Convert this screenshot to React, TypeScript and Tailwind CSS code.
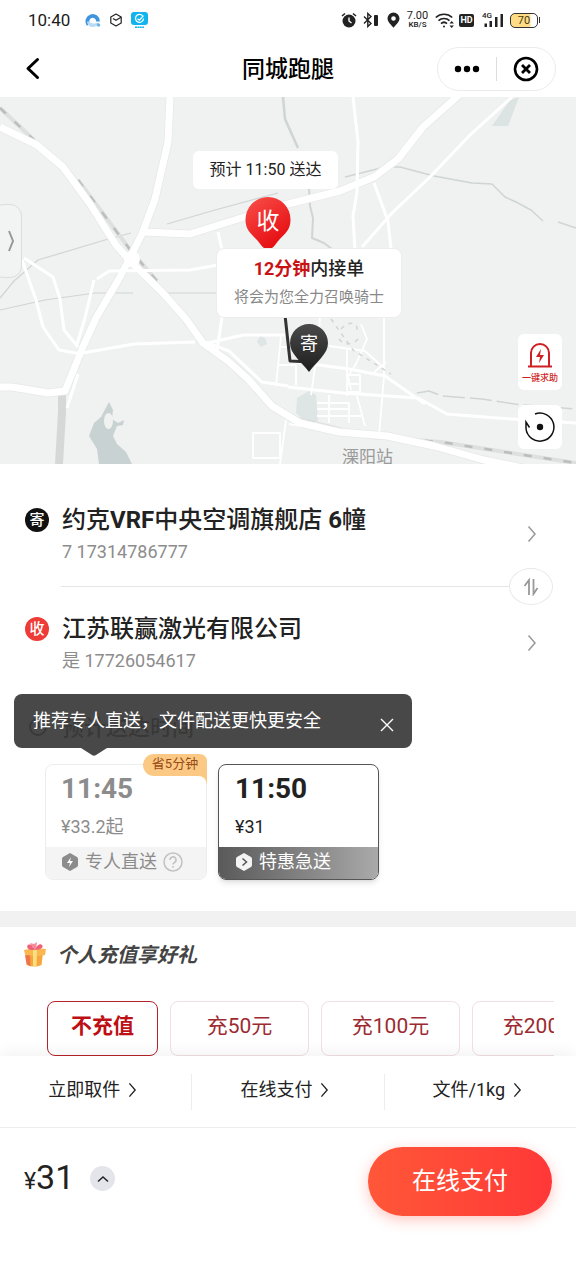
import React from "react";

const rechargeOptions = ["不充值", "充50元", "充100元", "充200元"];
const orderOptions = ["立即取件", "在线支付", "文件/1kg"];

function Chevron({ className }: { className: string }) {
  return (
    <svg viewBox="0 0 10 18" fill="none" stroke="currentColor" strokeWidth="1.5" className={className} aria-hidden="true">
      <path d="M1.5 1.5 8 9l-6.5 7.5" />
    </svg>
  );
}

function StatusBar() {
  return (
    <div className="flex h-10 items-center justify-between pl-7 pr-9 text-[#1c1c1c]">
      <div className="flex items-center">
        <span className="w-[43px] text-[17px] leading-6">10:40</span>
        <svg viewBox="0 0 16 16" className="ml-3.5 size-4" aria-hidden="true">
          <path d="M3.500 12.500A5.300 5.300 0 1 1 13 9.500" fill="none" stroke="#3f95dd" strokeWidth="3.800" />
          <path d="M2 10c2-1.500 3.500 1.500 6 1.500s4-1.500 6-.5c-1 2.500-3.500 4-6.500 4C4.500 15 2.500 13 2 10Z" fill="#b9dcf8" />
          <circle cx="13.500" cy="13" r="1.800" fill="#6db4ea" />
        </svg>
        <svg viewBox="0 0 14 14" className="ml-2 size-3.5" fill="none" stroke="#222" strokeWidth="1.200" strokeLinejoin="round" aria-hidden="true">
          <path d="m7 1 5.200 3v6L7 13l-5.200-3V4Z" />
          <path d="m4 5.500 3 1.800L12 4.300" />
        </svg>
        <svg viewBox="0 0 17 17" className="ml-2 size-[17px]" aria-hidden="true">
          <rect x="0" y="0" width="17" height="13" rx="3" fill="#12b4ef" />
          <path d="M11.500 3.700a4 4 0 1 0 1 2.800M6.500 6.700l2 1.500 4-4.500" fill="none" stroke="#fff" strokeWidth="1.200" />
          <path d="M4 15.300h9" stroke="#12b4ef" strokeWidth="1.600" strokeDasharray="2 .4" />
        </svg>
      </div>
      <div className="flex items-center">
        <svg viewBox="0 0 16 16" className="size-4" aria-hidden="true">
          <circle cx="8" cy="9" r="6.500" fill="#222" />
          <path d="M1 4 4 1.500M15 4l-3-2.500" stroke="#222" strokeWidth="1.600" />
          <path d="M8 5.500V9l2.500 2" stroke="#fff" strokeWidth="1.400" fill="none" />
        </svg>
        <svg viewBox="0 0 16 16" className="ml-1.5 size-4" aria-hidden="true">
          <path d="m1 4.500 7 7-3.200 3V1.500L8 4.500l-7 7" fill="none" stroke="#222" strokeWidth="1.400" />
          <rect x="11" y="3" width="4" height="11" rx="1" fill="#222" />
        </svg>
        <svg viewBox="0 0 13 16" className="ml-2 h-4 w-[13px]" aria-hidden="true">
          <path fillRule="evenodd" d="M6.500.5a6 6 0 0 0-6 6c0 3.500 4 6.500 6 9.300 2-2.800 6-5.800 6-9.300a6 6 0 0 0-6-6Zm0 3.700a2.300 2.300 0 1 1 0 4.600 2.300 2.300 0 0 1 0-4.600Z" fill="#222" />
        </svg>
        <div className="ml-1.5 flex w-[23px] flex-col items-center">
          <span className="text-[11px] leading-[10px]">7.00</span>
          <span className="text-[8px] font-medium leading-[8px]">KB/S</span>
        </div>
        <svg viewBox="0 0 20 17" className="ml-1.5 h-[17px] w-5" fill="none" stroke="#222" strokeWidth="1.700" aria-hidden="true">
          <path d="M.8 5.500a12 12 0 0 1 16.400 0M3.500 8.700a8 8 0 0 1 11 0M6 11.600a4.500 4.500 0 0 1 6 0" />
          <circle cx="9" cy="14.500" r="1" fill="#222" stroke="none" />
          <path d="M14.500 11.500 16.700 9l2.200 2.500ZM14.500 13.500l2.200 2.500 2.200-2.500Z" fill="#222" stroke="none" />
        </svg>
        <span className="ml-1 flex h-[13px] w-[15px] items-center justify-center rounded-xs bg-[#222] text-[9px] font-bold leading-[13px] text-white">HD</span>
        <div className="relative ml-2 h-4 w-[22px]">
          <span className="absolute left-0 top-0 text-[8px] font-medium leading-[8px]">4G</span>
          <svg viewBox="0 0 22 16" className="h-4 w-[22px]" fill="#222" aria-hidden="true">
            <path d="M2.500 11.500H5V15H2.500zM7.500 9H10v6H7.500zM13 5h2.500v10H13zM18.500 2H21v13h-2.500z" />
          </svg>
        </div>
        <div className="ml-1.5 flex h-[15px] w-7 items-center justify-center rounded-[5px] border border-[#333] bg-linear-to-r from-[#ffdc85] from-70% to-white to-80% text-[11px] leading-none text-[#4a3a10]">70</div>
        <span className="ml-px h-1.5 w-px bg-[#333]" />
      </div>
    </div>
  );
}

function Header() {
  return (
    <header className="grid h-[57px] grid-cols-3 items-center px-5">
      <button type="button" aria-label="返回" className="flex size-8 items-center">
        <svg viewBox="0 0 24 24" className="size-6" fill="none" stroke="#000" strokeWidth="3" strokeLinecap="round" strokeLinejoin="round" aria-hidden="true">
          <path d="M17.500 2.500 8 11.500l9.500 9" />
        </svg>
      </button>
      <h1 className="pt-0.5 text-center text-[23px] font-medium leading-8 text-black">同城跑腿</h1>
      <div className="flex h-11 w-[119px] items-center justify-self-end rounded-full border border-[#ececec]">
        <button type="button" aria-label="更多" className="flex flex-1 justify-center">
          <svg viewBox="0 0 26 8" className="h-2 w-[26px]" aria-hidden="true">
            <circle cx="4" cy="4" r="3.200" /><circle cx="13" cy="4" r="3.200" /><circle cx="22" cy="4" r="3.200" />
          </svg>
        </button>
        <span className="h-6 w-px bg-[#dcdcdc]" />
        <button type="button" aria-label="关闭" className="flex flex-1 justify-center">
          <svg viewBox="0 0 26 26" className="size-[26px]" fill="none" stroke="#000" aria-hidden="true">
            <circle cx="13" cy="13" r="11" strokeWidth="2.600" />
            <path d="m9 9 8 8m0-8-8 8" strokeWidth="2.800" />
          </svg>
        </button>
      </div>
    </header>
  );
}

function MapCanvas() {
  return (
    <svg viewBox="0 97 576 367" preserveAspectRatio="xMidYMid slice" className="size-full" fill="none" strokeLinejoin="round" aria-hidden="true">
      <g fill="#c9d2d2">
        <path d="m99 464-2-15-8-13 5-13 7-6 8-15 4 8-1 9 6 4 6-3-1 5-6 1-4 10 4 8 9 8 6 12Z" />
        <path d="m297 398 12-7 7 4 2 26-12 1-10-9Z" fill="#dde5e5" />
        <path d="m510 100 9-3-11 29-16 0Z" fill="#dbe3e3" />
        <path d="m260 336 5 2 2 6-6 3-4-5Z" fill="#dfe4e4" />
      </g>
      <ellipse cx="108.500" cy="421" rx="4.500" ry="8" fill="#f0f1f1" />
      <g stroke="#cfd5d5" strokeWidth="1.200">
        <path d="m38 260 67-20 26-7M0 310l45-10 50-7h38M168 293h48M0 298l14-17 24-21M167 224l48-14 63-17" />
        <path d="m283 97 2 22 13 29" strokeWidth="2.500" />
        <path d="m309 188 1 18 3 12-1 20 12 5 8 6" strokeWidth="2" />
        <path d="m345 177 40-10 15 0 34 9 38 7 20 1 13 13 11 5 15 8 12 11M558 222l18 6" strokeWidth="1.500" />
        <path d="m417 393 12-2 13 5 40 3 40 6 54 4" strokeDasharray="22 5" strokeWidth="1.500" />
      </g>
      <g stroke="#dedfdf" strokeWidth="4"><path d="m0 108 34 32M78 180l53 71 26 30M205 343l14 12M256 392l30 24 85 21 70 5 70 11 65 10" /></g>
      <g stroke="#bcbdbd" strokeWidth="2.500" strokeDasharray="8 12"><path d="m0 108 34 32M78 180l53 71 26 30M205 343l14 12M256 392l30 24 85 21 70 5 70 11 65 10" /></g>
      <path d="m62 392 0 20-3 52" stroke="#d6d7d7" strokeWidth="8" />
      <g stroke="#e7e8e8">
        <path d="m0 127 37 18 26 22 27 37 26 41 15 17 31 30 24 27 17 24 25 18 20 18 24 27 28 17 39 9 48 4 47 10 50 14 44 9" strokeWidth="8.500" />
        <path d="m170 97-2 45-13 57-13 35-22 43-24 41-14 31-17 42-17 2-36-6H0" strokeWidth="8.500" />
        <path d="m143 232 47 2 48-15 50-15 52-13 34-14 24-18 25-32 36-32" strokeWidth="8.500" />
      </g>
      <g stroke="#fff" strokeWidth="7">
        <path d="m0 127 37 18 26 22 27 37 26 41 15 17 31 30 24 27 17 24 25 18 20 18 24 27 28 17 39 9 48 4 47 10 50 14 44 9" />
        <path d="m170 97-2 45-13 57-13 35-22 43-24 41-14 31-17 42-17 2-36-6H0" />
        <path d="m143 232 47 2 48-15 50-15 52-13 34-14 24-18 25-32 36-32" />
      </g>
      <circle cx="132" cy="259" r="8" fill="#fff" />
      <g stroke="#fff" strokeWidth="3">
        <path d="m353 97 5 45-1 50-4 24 2 34M512 97l-42 38-40 42-38 36-30 34M374 183l14 38 3 28M218 232l4 18M97 279l12-8 81-1 28-5M22 260l14 40 7 27 16 23 22 4M24 258l29 19 7 22 4 31 14 17M94 280l-9 38-8 26M77 354l57-10 61-2M208 343l35-8 45 0M205 342l24 9 33 31 26 4M78 374l-11 34M222 317l-5 34" />
        <path d="m288 387 55 6 75 5 29 16 50 4 79 5M288 361l61 8 36 7 40 28" />
      </g>
      <g stroke="#fff" strokeWidth="1.800">
        <path d="M384 317v60l-5 58M320 317l-2 29-7 49M361 324l6 15-11 25-8 12 3 14M329 346l36 5 20 18M347 349v47M317 403h32v20M329 395v28M317 409h32M317 416h44M357 396l8 30M289 424l26 4 63 8M253 433h27v25h-27ZM281 336l-5 50M281 347h7M279 365h17v20M346 375h14v17h-13M346 384h13M386 362l-15 13M286 420l-6 44" />
      </g>
      <path d="m331 319 22 31 38 24M341 329c12-12 18-3 16 4M339 339c5 7 14 6 19 0" stroke="#cfd5d5" strokeWidth="1.500" strokeDasharray="4 5" />
      <path d="m285 315 5 46 20 1" stroke="#333" strokeWidth="3" />
    </svg>
  );
}

function DeliveryMap() {
  return (
    <section aria-label="地图" className="relative h-[367px] overflow-hidden bg-[#f0f1f1]">
      <MapCanvas />
      <span className="absolute left-[342px] top-[348px] text-[17px] leading-6 text-[#9b9b9b]">溧阳站</span>
      <button type="button" aria-label="展开" className="absolute -left-2 top-[107px] flex h-[74px] w-[30px] items-center justify-center rounded-xl border border-[#dcdcdc] bg-[#f2f3f3] pl-2 text-[#999]">
        <svg viewBox="0 0 8 22" className="h-[22px] w-2" fill="none" stroke="currentColor" strokeWidth="2" aria-hidden="true"><path d="m2 1 4 10-4 10" /></svg>
      </button>
      <div className="absolute left-[193px] top-[54px] flex h-[38px] w-[145px] items-center justify-center rounded-md bg-white text-base text-[#222]">预计 11:50 送达</div>
      <div className="absolute left-[245px] top-[99px] h-[54px] w-[46px]">
        <svg viewBox="0 0 46 54" className="absolute inset-0" aria-hidden="true">
          <defs><linearGradient id="pin-red" x2="0.6" y2="1"><stop stopColor="#f9504a" /><stop offset="1" stopColor="#e50d12" /></linearGradient></defs>
          <path d="M23 1A22.500 22.500 0 0 0 .5 24c0 10 6 14 11.500 20 5 6 6 9 11 9s6-3 11-9c5.500-6 11.500-10 11.500-20A22.500 22.500 0 0 0 23 1Z" fill="url(#pin-red)" />
        </svg>
        <span className="relative block pt-0.5 text-center text-[23px] leading-[48px] text-white">收</span>
      </div>
      <div className="absolute left-[289px] top-[227px] h-12 w-10">
        <svg viewBox="0 0 40 48" className="absolute inset-0" aria-hidden="true">
          <defs><linearGradient id="pin-dark" x2="0" y2="1"><stop stopColor="#4a4a4a" /><stop offset="1" stopColor="#1e1e1e" /></linearGradient></defs>
          <path d="M20 0A19 19 0 0 0 1 19c0 11 11 18 19 29 8-11 19-18 19-29A19 19 0 0 0 20 0Z" fill="url(#pin-dark)" />
        </svg>
        <span className="relative block text-center text-lg leading-10 text-white">寄</span>
      </div>
      <div className="absolute left-[216px] top-[151px] flex h-[70px] w-[186px] flex-col items-center rounded-lg border border-[#ededed] bg-white pt-2">
        <p className="text-lg font-medium leading-6 text-[#222]"><span className="font-bold text-[#c91215]">12分钟</span>内接单</p>
        <p className="mt-1 text-[15px] leading-6 text-[#888]">将会为您全力召唤骑士</p>
      </div>
      <button type="button" className="absolute right-3.5 top-[237px] flex h-14 w-11 flex-col items-center rounded-md bg-white pt-2 text-[#cf1f24]">
        <svg viewBox="0 0 26 26" className="size-[26px]" fill="none" stroke="currentColor" strokeWidth="2" aria-hidden="true">
          <path d="M4 24V11a9 9 0 0 1 18 0v13M1 24.500h24" />
          <path d="m14 7-5 8h4l-1 6 5-8h-4Z" fill="currentColor" stroke="none" />
        </svg>
        <span className="mt-0.5 whitespace-nowrap text-[9px] font-medium leading-4">一键求助</span>
      </button>
      <button type="button" aria-label="定位" className="absolute right-3.5 top-[308px] flex h-11 w-11 items-center justify-center rounded-md bg-white">
        <svg viewBox="0 0 32 32" className="size-8" fill="none" stroke="#111" strokeWidth="1.500" aria-hidden="true">
          <path d="M11 3a14 14 0 1 1-9 14.500V11l3.500 5.500" />
          <circle cx="16" cy="16" r="3.200" fill="#111" stroke="none" />
        </svg>
      </button>
    </section>
  );
}

function Address({ badge, color, contact, children }: { badge: string; color: string; contact: string; children: React.ReactNode }) {
  return (
    <button type="button" className="grid w-full grid-cols-[37px_1fr_10px] pl-[25px] pr-[39px] text-left">
      <span className={"mt-1 flex size-6 items-center justify-center rounded-full text-[15px] font-medium leading-none text-white " + color}>{badge}</span>
      <span className="block">
        <span className="block text-2xl font-medium leading-8 text-[#222]">{children}</span>
        <span className="mt-1 block text-lg leading-6 text-[#8c8c8c]">{contact}</span>
      </span>
      <Chevron className="h-[18px] w-2.5 self-center text-[#999]" />
    </button>
  );
}

function Addresses() {
  return (
    <section aria-label="地址" className="pt-10">
      <Address badge="寄" color="bg-[#111]" contact="7 17314786777">
        约克<b>VRF</b>中央空调旗舰店 <b>6</b>幢
      </Address>
      <div className="mb-2 mt-1 flex items-center pl-[61px] pr-[23px]">
        <span className="h-px flex-1 bg-[#e4e4e4]" />
        <button type="button" aria-label="交换地址" className="flex h-[37px] w-11 items-center justify-center rounded-[50%] border border-[#e8e8e8] text-[#999]">
          <svg viewBox="0 0 16 18" className="h-[18px] w-4" fill="none" stroke="currentColor" strokeWidth="1.800" aria-hidden="true">
            <path d="m1.500 8 4.500-6v15M10.500 1v15l4-6" />
          </svg>
        </button>
      </div>
      <Address badge="收" color="bg-[#ee3b38]" contact="是 17726054617">江苏联赢激光有限公司</Address>
    </section>
  );
}

function DeliveryTimes() {
  return (
    <section className="relative pb-[31px] pt-[38px]">
      <h2 className="flex h-8 items-center gap-3.5 pl-7 text-[22px] font-medium text-[#222]">
        <svg viewBox="0 0 20 20" className="size-5" fill="none" stroke="currentColor" strokeWidth="2" aria-hidden="true"><circle cx="10" cy="10" r="8" /><path d="M10 5v5h4" /></svg>
        预计送达时间
      </h2>
      <div role="status" className="absolute left-3.5 top-[21px] flex h-[54px] w-[398px] items-center justify-between rounded-lg bg-[#3a3a3a]/93 pl-[19px] pr-4 text-white">
        <span className="text-lg leading-6">推荐专人直送，文件配送更快更安全</span>
        <button type="button" aria-label="关闭提示" className="mt-2">
          <svg viewBox="0 0 18 18" className="size-[18px]" fill="none" stroke="#fff" strokeWidth="1.400" aria-hidden="true"><path d="m3 3 12 12M15 3 3 15" /></svg>
        </button>
        <svg viewBox="0 0 26 8" className="absolute left-[67px] top-full h-2 w-[26px]" aria-hidden="true"><path d="M0 0h26L15 7q-2 1.500-4 0Z" fill="#484848" /></svg>
      </div>
      <div className="mt-[21px] flex gap-[11px] pl-[45px]">
        <button type="button" className="relative w-[162px] rounded-lg border border-[#ededed] text-left text-[#8c8c8c]">
          <span className="absolute -right-px -top-[11px] h-[31px] w-16">
            <svg viewBox="0 0 64 31" className="absolute inset-0" aria-hidden="true"><path d="M11 0h45q8 0 8 8v23q-1-9-9-9H11A11 11 0 0 1 11 0Z" fill="#fbc983" /></svg>
            <span className="relative block text-center text-[13px] leading-5 text-[#9a4a16]">省5分钟</span>
          </span>
          <span className="block px-[15px] pb-2 pt-2">
            <span className="block text-[28px] font-bold leading-8">11:45</span>
            <span className="mt-2.5 block text-lg leading-6">¥33.2起</span>
          </span>
          <span className="flex h-8 items-center rounded-b-lg bg-[#f4f4f4] px-[15px] pb-0.5 text-lg leading-6">
            <svg viewBox="0 0 18 20" className="mr-1.5 h-5 w-[18px]" aria-hidden="true"><path d="m9 1 7 4q1 .5 1 2v6q0 1.500-1 2l-7 4-7-4q-1-.5-1-2V7q0-1.500 1-2Z" fill="#8c8c8c" /><path d="m10 5-4 6h3l-1 4 4-6H9Z" fill="#fff" /></svg>
            专人直送
            <svg viewBox="0 0 20 20" className="ml-1.5 size-5" fill="none" stroke="#c2c2c2" strokeWidth="1.500" aria-hidden="true"><circle cx="10" cy="10" r="9" /><path d="M7 8a3 3 0 1 1 4.500 2.500Q10 11.300 10 12.500M10 14v1.700" /></svg>
          </span>
        </button>
        <button type="button" className="w-[161px] overflow-hidden rounded-lg border border-[#555] text-left text-[#222] shadow-md shadow-black/10">
          <span className="block px-4 pb-2 pt-2">
            <span className="block text-[28px] font-bold leading-8">11:50</span>
            <span className="mt-2.5 block text-lg leading-6">¥31</span>
          </span>
          <span className="flex h-8 items-center bg-linear-to-r from-[#5a5a5a] to-[#aaa] px-4 pb-0.5 text-lg leading-6 text-white">
            <svg viewBox="0 0 18 20" className="mr-1.5 h-5 w-[18px]" aria-hidden="true"><path d="m9 1 7 4q1 .5 1 2v6q0 1.500-1 2l-7 4-7-4q-1-.5-1-2V7q0-1.500 1-2Z" fill="#f4f4f4" /><path d="m7.500 6.500 4 3.500-4 3.500" fill="none" stroke="#555" strokeWidth="1.500" /></svg>
            特惠急送
          </span>
        </button>
      </div>
    </section>
  );
}

function Recharge() {
  return (
    <section className="border-t-[16px] border-[#f1f1f1]">
      <h2 className="flex items-center gap-2.5 pl-[23px] pt-3 text-xl font-bold italic leading-8 text-[#444]">
        <svg viewBox="0 0 24 26" className="h-[26px] w-6" aria-hidden="true">
          <path d="m3 11 17 0-1.500 12Q11 26 4.500 23Z" fill="#f7a63b" />
          <path d="m1 8 10-2 12 1-1 6q-10 2-20-.5Z" fill="#fbb850" />
          <path d="m2 13 1.500 9.500 4 1.800L7 13.500Z" fill="#ee754a" />
          <path d="m10 7 4 .1-.5 17.500H10Z" fill="#fbdf80" />
          <path d="M12 8C3 9 3 3 6 2.500S11 5 12 8c1-4 5-7 7-5s-1 5-7 5Z" fill="#ee6178" />
          <path d="M10 6 7 1l4 1 3-2-1 7Z" fill="#f58a9a" />
        </svg>
        个人充值享好礼
      </h2>
      <div className="ml-[47px] mr-[22px] mt-[30px] flex gap-3 overflow-hidden">
        {rechargeOptions.map((label, i) => (
          <button
            key={label}
            type="button"
            className={
              "h-[55px] shrink-0 rounded-lg border pb-1 text-[21px] " +
              (i === 0 ? "w-[111px] border-[#b5222a] font-bold text-[#bd0f14]" : "w-[139px] border-[#f1dfe1] text-[#9c2a31]")
            }
          >
            {label}
          </button>
        ))}
      </div>
    </section>
  );
}

function OrderFooter() {
  return (
    <footer className="relative bg-white shadow-[0_-4px_14px_rgba(0,0,0,0.05)]">
      <div className="flex h-[72px] items-center divide-x divide-[#ededed] border-b border-[#ededed]">
        {orderOptions.map((label) => (
          <button key={label} type="button" className="flex h-9 flex-1 items-center justify-center gap-2 pb-1 pr-1.5 text-lg text-[#222]">
            {label}
            <Chevron className="h-4 w-[9px]" />
          </button>
        ))}
      </div>
      <div className="flex items-center px-6 pb-16 pt-[19px]">
        <div className="flex items-center pb-1.5">
          <p className="flex items-baseline text-[#222]">
            <span className="text-[23px] leading-8">¥</span>
            <span className="text-[34px] leading-9">31</span>
          </p>
          <button type="button" aria-label="费用明细" className="ml-4 flex size-[25px] items-center justify-center rounded-full bg-[#e4e5ea]">
            <svg viewBox="0 0 12 8" className="h-2 w-3" fill="none" stroke="#222" strokeWidth="1.500" aria-hidden="true"><path d="m1 6.500 5-4.500 5 4.500" /></svg>
          </button>
        </div>
        <button type="button" className="ml-auto h-[69px] w-[184px] rounded-full bg-linear-to-r from-[#ff5638] to-[#ff3737] pb-0.5 text-2xl text-white shadow-[0_4px_14px_rgba(255,70,50,0.3)]">在线支付</button>
      </div>
    </footer>
  );
}

export default function App() {
  return (
    <main className="min-h-screen overflow-hidden bg-white font-[Roboto,'Noto_Sans_CJK_SC',sans-serif]">
      <StatusBar />
      <Header />
      <DeliveryMap />
      <Addresses />
      <DeliveryTimes />
      <Recharge />
      <OrderFooter />
    </main>
  );
}
